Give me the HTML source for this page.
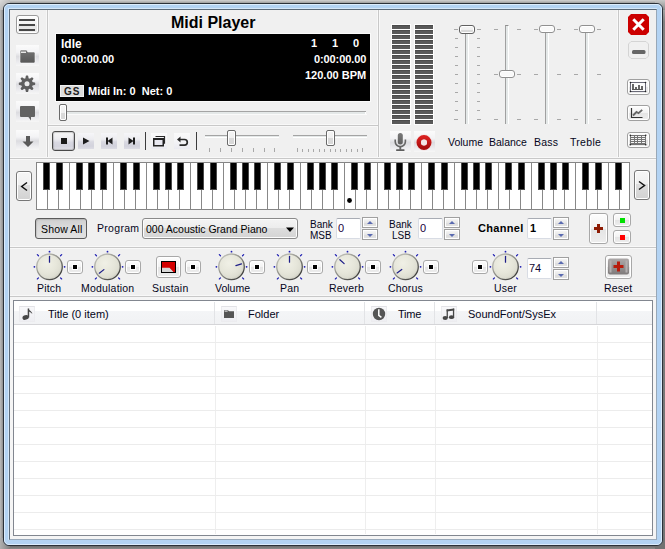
<!DOCTYPE html>
<html><head><meta charset="utf-8">
<style>
*{margin:0;padding:0;box-sizing:border-box}
html,body{width:665px;height:549px;overflow:hidden}
body{position:relative;background:#9a9a9a;font-family:"Liberation Sans",sans-serif;font-size:10.5px;color:#000}
.a{position:absolute}
.t{position:absolute;white-space:nowrap;line-height:1}
#shT{left:0;top:0;width:665px;height:3px;background:linear-gradient(#cfcfcf,#a4a4a4)}
#shB{left:0;top:546px;width:665px;height:3px;background:linear-gradient(#6a6a6a,#9a9a9a)}
#win{left:3px;top:3px;width:660px;height:543px;border:1px solid #2b3139;border-radius:6px;background:#b3d3f3}
#win2{left:4px;top:4px;width:658px;height:541px;border:1px solid #dcecfc;border-radius:5px}
#inner{left:9px;top:9px;width:648px;height:531px;border:1px solid #5b6a79;background:#f0f0f0;border-bottom-color:#9aaabb;border-right-color:#98a8b8}
.vs{position:absolute;width:1px;background:#c8c8c8;box-shadow:-1px 0 0 #f8f8f8,1px 0 0 #f8f8f8}
.hs{position:absolute;height:1px;background:#c8c8c8;box-shadow:0 -1px 0 #f8f8f8,0 1px 0 #f8f8f8}
.gbtn{position:absolute;background:linear-gradient(#fbfbfb 0%,#f3f3f5 35%,#dcdce0 55%,#ebebee 80%,#f6f6f6 100%)}
.rbtn{position:absolute;border:1px solid #a0a0a0;border-radius:3px;background:linear-gradient(#fdfdfd,#f2f2f2 50%,#e4e4e4 51%,#eeeeee);box-shadow:inset 0 0 0 1px #fff}
.thumb{border:1px solid #6a6a6a;border-radius:2px;background:linear-gradient(#f4f4f4 0%,#f0f0f0 50%,#dadada 51%,#d8d8d8);box-shadow:inset 0 0 0 1px #fff}
.track{height:3px;border-top:1px solid #a4a4a4;background:#e4e8e8;border-bottom:1px solid #fff}
.vu{width:20px;height:101px;background:#fff repeating-linear-gradient(#fff 0,#fff 1px,#454545 1px,#585858 2.5px,#5a5a5a 5px);background-size:18px 5px;background-position:1px 0;background-repeat:repeat-y;border-bottom:1px solid #fff}
.vtrack{width:4px;border-left:1px solid #a0a0a0;border-top:1px solid #909090;background:#e4e8e8;border-right:1px solid #fff}
.tk{height:1px;background:#a8a8a8}
.vthumb{border:1px solid #909090;border-radius:3px;background:#f9f9f9;box-shadow:inset 0 0 0 1px #fff}
.lbl{font-size:10.5px;color:#050520}
.arr{border:1px solid #777;border-radius:3px;background:linear-gradient(#f6f6f6,#f0f0f0 45%,#dedede 47%,#d2d2d2);box-shadow:inset 0 0 0 1px #fff}
.ctl{font-size:10.5px}
.sm{font-size:10px;color:#050520}
.edit{border:1px solid #d8dce4;border-top-color:#a8acb4;background:#fff;border-radius:2px}
.spin{border:1px solid #a0a0a0;background:linear-gradient(#f8f8f8,#e8e8e8 50%,#dcdcdc 51%,#e4e4e4);box-shadow:inset 0 0 0 1px #fff}
.kl{font-size:10.5px;color:#050520;letter-spacing:0.2px}
.hib{width:16px;height:16px;border:1px solid #ececef;border-top-color:#e2e2e6;background:linear-gradient(#f8f8fa,#eeeef2)}
.hd{font-size:11px;color:#050520}
.tb{background:linear-gradient(#f6f6f8 0%,#ececf0 40%,#d9d9e1 55%,#d2d2dc 82%,#dcdce4 100%)}
.wb{background:linear-gradient(#fafafa 0%,#f4f4f6 50%,#eaeaf0 100%)}
</style></head><body>
<div class="a" style="left:0;top:0;width:3px;height:549px;background:linear-gradient(90deg,#bcbcbc,#a6a6a6,#8c8c8c)"></div>
<div class="a" style="left:0;top:0;width:665px;height:3px;background:linear-gradient(#d2d2d2,#bababa,#9c9c9c)"></div>
<div class="a" style="left:663px;top:0;width:2px;height:549px;background:linear-gradient(#c0c0c0,#808080 4%,#747474)"></div>
<div class="a" style="left:0;top:546px;width:665px;height:3px;background:linear-gradient(#6c6c6c,#7c7c7c,#8c8c8c)"></div>
<div class="a" style="left:0;top:546px;width:4px;height:3px;background:linear-gradient(90deg,#bbb,#999)"></div>
<div class="a" style="left:655px;top:538px;width:10px;height:11px;background:#727272"></div>
<div class="a" style="left:655px;top:0;width:10px;height:10px;background:linear-gradient(#c8c8c8,#8a8a8a)"></div>
<div class="a" style="left:0;top:538px;width:10px;height:11px;background:linear-gradient(90deg,#b0b0b0,#808080)"></div>
<div class="a" style="left:0;top:0;width:10px;height:10px;background:linear-gradient(135deg,#dadada,#a8a8a8)"></div>
<div class="a" id="win"></div>
<div class="a" id="win2"></div>
<div class="a" style="left:8px;top:8px;width:649px;height:532px;border-top:1px solid #d4e6f8;border-left:1px solid #d4e6f8"></div>
<div class="a" id="inner"></div>

<!-- separators -->
<div class="vs" style="left:47px;top:10px;height:148px"></div>
<div class="vs" style="left:378px;top:10px;height:148px"></div>
<div class="vs" style="left:618px;top:10px;height:148px"></div>
<div class="hs" style="left:48px;top:125px;width:330px"></div>
<div class="hs" style="left:10px;top:158px;width:646px"></div>
<div class="hs" style="left:10px;top:247px;width:646px"></div>
<div class="hs" style="left:10px;top:296px;width:646px"></div>

<!-- sidebar -->
<div class="rbtn" style="left:16px;top:15px;width:23px;height:19px;border-color:#9a9a9a"></div>
<div class="a" style="left:19px;top:19px;width:16px;height:2px;background:#474747"></div>
<div class="a" style="left:19px;top:24px;width:16px;height:2px;background:#474747"></div>
<div class="a" style="left:19px;top:29px;width:16px;height:2px;background:#474747"></div>

<div class="gbtn" style="left:16px;top:45px;width:23px;height:21px"></div>
<svg class="a" style="left:16px;top:45px" width="23" height="21" viewBox="0 0 23 21">
<defs><linearGradient id="fg" x1="0" y1="0" x2="0" y2="1"><stop offset="0" stop-color="#747474"/><stop offset="1" stop-color="#575757"/></linearGradient></defs>
<path d="M4 6.2q0-1.2 1.2-1.2h4.8q0.8 0 1.2 0.8l0.6 1.2h5.9q1.3 0 1.3 1.3v8.5q0 1.2-1.2 1.2h-12.6q-1.2 0-1.2-1.2z" fill="url(#fg)" stroke="#fff" stroke-width="0.7" stroke-opacity="0.8"/>
<rect x="5" y="6.6" width="5" height="1.3" fill="#f4f4f4"/>
</svg>
<div class="gbtn" style="left:16px;top:73px;width:23px;height:21px"></div>
<svg class="a" style="left:16px;top:73px" width="23" height="21" viewBox="0 0 23 21">
<g transform="translate(11,10.7)" fill="#5e5e5e">
<circle r="5.8"/>
<g id="tooth"><path d="M-1.7 -5h3.4l-0.5 -2.7q-0.1 -0.5 -0.6 -0.5h-1.2q-0.5 0 -0.6 0.5z"/></g>
<use href="#tooth" transform="rotate(45)"/><use href="#tooth" transform="rotate(90)"/><use href="#tooth" transform="rotate(135)"/>
<use href="#tooth" transform="rotate(180)"/><use href="#tooth" transform="rotate(225)"/><use href="#tooth" transform="rotate(270)"/><use href="#tooth" transform="rotate(315)"/>
<circle r="2.5" fill="#ebebeb"/>
</g></svg>
<div class="gbtn" style="left:16px;top:101px;width:23px;height:21px"></div>
<svg class="a" style="left:16px;top:101px" width="23" height="21" viewBox="0 0 23 21">
<rect x="4" y="5" width="15" height="11" rx="1" fill="#626262"/>
<path d="M12 15.5h3v4z" fill="#626262"/>
</svg>
<div class="gbtn" style="left:16px;top:130px;width:23px;height:20px"></div>
<svg class="a" style="left:16px;top:130px" width="23" height="20" viewBox="0 0 23 20">
<path d="M10 6h4v5.5h3.5l-5.5 5.5l-5.5-5.5h3.5z" fill="#5a5a5a"/>
</svg>

<!-- title -->
<div class="t" style="left:171px;top:15px;font-size:16px;font-weight:bold">Midi Player</div>

<!-- display -->
<div class="a" style="left:55px;top:33px;width:316px;height:69px;background:#000;border:1px solid #fafafa"></div>
<div class="t" style="left:61px;top:38px;font-size:12px;font-weight:bold;color:#fff">Idle</div>
<div class="t" style="left:61px;top:54px;font-size:11px;font-weight:bold;color:#fff">0:00:00.00</div>
<div class="t" style="left:311px;top:38px;font-size:11px;font-weight:bold;color:#fff">1</div>
<div class="t" style="left:332px;top:38px;font-size:11px;font-weight:bold;color:#fff">1</div>
<div class="t" style="left:353px;top:38px;font-size:11px;font-weight:bold;color:#fff">0</div>
<div class="t" style="left:314px;top:54px;font-size:11px;font-weight:bold;color:#fff;letter-spacing:-0.1px">0:00:00.00</div>
<div class="t" style="left:305px;top:70px;font-size:11px;font-weight:bold;color:#fff">120.00 BPM</div>
<div class="a" style="left:60px;top:85px;width:24px;height:12px;background:#dcdcdc;border:1px solid #efefef"></div>
<div class="t" style="left:64px;top:87px;font-size:10px;font-weight:bold;color:#222;letter-spacing:1px">GS</div>
<div class="t" style="left:88px;top:86px;font-size:11px;font-weight:bold;color:#fff">Midi In: 0&nbsp; Net: 0</div>


<!-- position slider -->
<div class="a" style="left:60px;top:111px;width:306px;height:1px;background:#a4a4a4"></div>
<div class="a" style="left:60px;top:112px;width:306px;height:2px;background:#e4e8e8;border-right:1px solid #fff"></div>
<div class="a" style="left:60px;top:114px;width:307px;height:1px;background:#fafafa"></div>
<div class="a thumb" style="left:59px;top:104px;width:8px;height:17px"></div>

<!-- transport -->
<div class="a" style="left:52px;top:131px;width:23px;height:20px;border:1px solid #4a4a4a;border-radius:3px;background:linear-gradient(#f8f8f8,#ececf0 40%,#d8d8e2 58%,#d4d4de 80%,#e4e4ea);box-shadow:inset 0 0 1px 1px rgba(0,0,0,.18)"></div>
<div class="a" style="left:61px;top:138px;width:6px;height:6px;background:#1a1a1a"></div>
<div class="gbtn tb" style="left:78px;top:133px;width:16px;height:16px"></div>
<svg class="a" style="left:78px;top:133px" width="16" height="16"><path d="M5 4.5v7l6.5-3.5z" fill="#1e1e1e"/></svg>
<div class="gbtn tb" style="left:101px;top:133px;width:16px;height:16px"></div>
<svg class="a" style="left:101px;top:133px" width="16" height="16"><rect x="5" y="4.5" width="2" height="7" fill="#1e1e1e"/><path d="M11.5 4.5v7l-5-3.5z" fill="#1e1e1e"/></svg>
<div class="gbtn tb" style="left:124px;top:133px;width:16px;height:16px"></div>
<svg class="a" style="left:124px;top:133px" width="16" height="16"><rect x="9" y="4.5" width="2" height="7" fill="#1e1e1e"/><path d="M4.5 4.5v7l5-3.5z" fill="#1e1e1e"/></svg>
<div class="a" style="left:145px;top:132px;width:1px;height:18px;background:#3c3c3c"></div>
<div class="gbtn wb" style="left:151px;top:133px;width:16px;height:16px"></div>
<svg class="a" style="left:151px;top:133px" width="16" height="16"><rect x="2.75" y="5.75" width="9.5" height="7" fill="#e8e8f0" stroke="#222" stroke-width="1.5"/><rect x="2" y="5" width="11" height="2" fill="#222"/><path d="M4.5 3.5h9v7.2" fill="none" stroke="#2a2a2a" stroke-width="1.2"/></svg>
<div class="gbtn wb" style="left:174px;top:133px;width:16px;height:16px"></div>
<svg class="a" style="left:174px;top:133px" width="16" height="16"><path d="M6 6.5h4.5a2.8 2.8 0 0 1 0 5.6h-5" fill="none" stroke="#2a2a2a" stroke-width="1.7"/><path d="M3 6.5l3.5-3v6z" fill="#2a2a2a"/></svg>
<div class="a" style="left:196px;top:132px;width:1px;height:18px;background:#3c3c3c"></div>

<!-- small sliders -->
<div class="a track" style="left:205px;top:135px;width:74px"></div>
<div class="a thumb" style="left:227px;top:130px;width:9px;height:16px"></div>
<div class="a track" style="left:293px;top:135px;width:74px"></div>
<div class="a thumb" style="left:326px;top:130px;width:9px;height:16px"></div>
<div class="a" style="left:209px;top:148px;width:1px;height:4px;background:#a8a8a8"></div>
<div class="a" style="left:220px;top:148px;width:1px;height:4px;background:#a8a8a8"></div>
<div class="a" style="left:231px;top:148px;width:1px;height:4px;background:#a8a8a8"></div>
<div class="a" style="left:242px;top:148px;width:1px;height:4px;background:#a8a8a8"></div>
<div class="a" style="left:253px;top:148px;width:1px;height:4px;background:#a8a8a8"></div>
<div class="a" style="left:264px;top:148px;width:1px;height:4px;background:#a8a8a8"></div>
<div class="a" style="left:274px;top:148px;width:1px;height:4px;background:#a8a8a8"></div>
<div class="a" style="left:297px;top:148px;width:1px;height:4px;background:#a8a8a8"></div>
<div class="a" style="left:302px;top:149px;width:1px;height:3px;background:#a8a8a8"></div>
<div class="a" style="left:308px;top:149px;width:1px;height:3px;background:#a8a8a8"></div>
<div class="a" style="left:313px;top:149px;width:1px;height:3px;background:#a8a8a8"></div>
<div class="a" style="left:319px;top:149px;width:1px;height:3px;background:#a8a8a8"></div>
<div class="a" style="left:324px;top:149px;width:1px;height:3px;background:#a8a8a8"></div>
<div class="a" style="left:330px;top:149px;width:1px;height:3px;background:#a8a8a8"></div>
<div class="a" style="left:335px;top:149px;width:1px;height:3px;background:#a8a8a8"></div>
<div class="a" style="left:340px;top:149px;width:1px;height:3px;background:#a8a8a8"></div>
<div class="a" style="left:346px;top:149px;width:1px;height:3px;background:#a8a8a8"></div>
<div class="a" style="left:351px;top:149px;width:1px;height:3px;background:#a8a8a8"></div>
<div class="a" style="left:357px;top:149px;width:1px;height:3px;background:#a8a8a8"></div>
<div class="a" style="left:362px;top:148px;width:1px;height:4px;background:#a8a8a8"></div>

<!-- VU -->
<div class="a vu" style="left:391px;top:24px"></div>
<div class="a vu" style="left:414px;top:24px"></div>
<div class="gbtn" style="left:390px;top:131px;width:21px;height:21px"></div>
<svg class="a" style="left:390px;top:131px" width="21" height="21" viewBox="0 0 21 21">
<defs><linearGradient id="mg" x1="0" y1="0" x2="0" y2="1"><stop offset="0" stop-color="#7a7a7a"/><stop offset="1" stop-color="#5e5e5e"/></linearGradient></defs>
<rect x="7.8" y="2" width="5" height="11.5" rx="2.5" fill="url(#mg)"/>
<path d="M5.2 8.5v2a5.1 5.1 0 0 0 10.2 0v-2" fill="none" stroke="#666" stroke-width="1.6"/>
<rect x="9.4" y="15.5" width="1.8" height="3.2" fill="#666"/>
<rect x="6" y="18.2" width="8.6" height="1.8" rx="0.7" fill="#5e5e5e"/>
</svg>
<div class="gbtn" style="left:414px;top:131px;width:21px;height:21px"></div>
<svg class="a" style="left:414px;top:131px" width="21" height="21" viewBox="0 0 21 21">
<defs><linearGradient id="rg" x1="0" y1="0" x2="0" y2="1"><stop offset="0" stop-color="#d82020"/><stop offset="1" stop-color="#a80c0c"/></linearGradient></defs>
<circle cx="10" cy="11.5" r="8.2" fill="#f6d4d4" opacity="0.55"/>
<circle cx="10" cy="11.5" r="5.25" fill="none" stroke="url(#rg)" stroke-width="4.5"/>
<circle cx="10" cy="11.5" r="3" fill="#f2e4e4"/>
</svg>

<!-- vertical sliders -->
<div class="a vtrack" style="left:465px;top:25px;height:99px"></div>
<div class="a tk" style="left:454px;top:29px;width:4px"></div><div class="a tk" style="left:477px;top:29px;width:4px"></div>
<div class="a tk" style="left:455px;top:38px;width:3px"></div><div class="a tk" style="left:477px;top:38px;width:3px"></div>
<div class="a tk" style="left:455px;top:47px;width:3px"></div><div class="a tk" style="left:477px;top:47px;width:3px"></div>
<div class="a tk" style="left:455px;top:56px;width:3px"></div><div class="a tk" style="left:477px;top:56px;width:3px"></div>
<div class="a tk" style="left:455px;top:65px;width:3px"></div><div class="a tk" style="left:477px;top:65px;width:3px"></div>
<div class="a tk" style="left:455px;top:74px;width:3px"></div><div class="a tk" style="left:477px;top:74px;width:3px"></div>
<div class="a tk" style="left:455px;top:83px;width:3px"></div><div class="a tk" style="left:477px;top:83px;width:3px"></div>
<div class="a tk" style="left:455px;top:92px;width:3px"></div><div class="a tk" style="left:477px;top:92px;width:3px"></div>
<div class="a tk" style="left:455px;top:101px;width:3px"></div><div class="a tk" style="left:477px;top:101px;width:3px"></div>
<div class="a tk" style="left:455px;top:110px;width:3px"></div><div class="a tk" style="left:477px;top:110px;width:3px"></div>
<div class="a tk" style="left:454px;top:119px;width:4px"></div><div class="a tk" style="left:477px;top:119px;width:4px"></div>
<div class="a vtrack" style="left:505px;top:25px;height:99px"></div>
<div class="a tk" style="left:494px;top:29px;width:4px"></div><div class="a tk" style="left:517px;top:29px;width:4px"></div>
<div class="a tk" style="left:494px;top:74px;width:4px"></div><div class="a tk" style="left:517px;top:74px;width:4px"></div>
<div class="a tk" style="left:494px;top:119px;width:4px"></div><div class="a tk" style="left:517px;top:119px;width:4px"></div>
<div class="a vtrack" style="left:545px;top:25px;height:99px"></div>
<div class="a tk" style="left:534px;top:29px;width:4px"></div><div class="a tk" style="left:557px;top:29px;width:4px"></div>
<div class="a tk" style="left:534px;top:74px;width:4px"></div><div class="a tk" style="left:557px;top:74px;width:4px"></div>
<div class="a tk" style="left:534px;top:119px;width:4px"></div><div class="a tk" style="left:557px;top:119px;width:4px"></div>
<div class="a vtrack" style="left:585px;top:25px;height:99px"></div>
<div class="a tk" style="left:574px;top:29px;width:4px"></div><div class="a tk" style="left:597px;top:29px;width:4px"></div>
<div class="a tk" style="left:574px;top:74px;width:4px"></div><div class="a tk" style="left:597px;top:74px;width:4px"></div>
<div class="a tk" style="left:574px;top:119px;width:4px"></div><div class="a tk" style="left:597px;top:119px;width:4px"></div>
<div class="a thumb" style="left:459px;top:25px;width:16px;height:9px;border-color:#606060;border-radius:3px"></div>
<div class="a vthumb" style="left:499px;top:70px;width:16px;height:8px"></div>
<div class="a vthumb" style="left:539px;top:25px;width:16px;height:8px"></div>
<div class="a vthumb" style="left:579px;top:25px;width:16px;height:8px"></div>
<div class="t lbl" style="left:448px;top:137px">Volume</div>
<div class="t lbl" style="left:489px;top:137px">Balance</div>
<div class="t lbl" style="left:534px;top:137px;letter-spacing:0.2px">Bass</div>
<div class="t lbl" style="left:570px;top:137px;letter-spacing:0.3px">Treble</div>

<!-- right toolbar -->
<svg class="a" style="left:628px;top:14px" width="21" height="21" viewBox="0 0 21 21">
<path d="M3 0h15l3 3v15l-3 3h-15l-3-3v-15z" fill="#cc0000"/>
<path d="M5.3 5.3l10.4 10.4M15.7 5.3l-10.4 10.4" stroke="#fff" stroke-width="3"/>
</svg>
<svg class="a" style="left:628px;top:41px" width="21" height="18" viewBox="0 0 21 18">
<path d="M3 0.5h15l2.5 2.5v12l-2.5 2.5h-15l-2.5-2.5v-12z" fill="#f0f0f0" stroke="#d4d4d4"/>
<rect x="4" y="9" width="13.5" height="4" rx="1.5" fill="#666"/>
</svg>
<div class="rbtn" style="left:627px;top:79px;width:23px;height:16px"></div>
<svg class="a" style="left:627px;top:79px" width="23" height="16" viewBox="0 0 23 16">
<rect x="3.5" y="3.5" width="15" height="9" fill="#fafafa" stroke="#6a6a78"/>
<rect x="5" y="5" width="2" height="6" fill="#666"/><rect x="8" y="8" width="2" height="3" fill="#666"/>
<rect x="11" y="6" width="2" height="5" fill="#666"/><rect x="14" y="7" width="2" height="4" fill="#666"/>
<rect x="5" y="10" width="11" height="1" fill="#555"/>
<circle cx="3.5" cy="3.5" r="0.8" fill="#222"/><circle cx="18.5" cy="3.5" r="0.8" fill="#222"/><circle cx="3.5" cy="12.5" r="0.8" fill="#222"/><circle cx="18.5" cy="12.5" r="0.8" fill="#222"/>
</svg>
<div class="rbtn" style="left:627px;top:105px;width:23px;height:16px"></div>
<svg class="a" style="left:627px;top:105px" width="23" height="16" viewBox="0 0 23 16">
<path d="M4.5 3v9.5h11" fill="none" stroke="#333" stroke-width="1.2"/>
<path d="M6 10.5l3.5-3.5l2 1.2l3.7-3.4" fill="none" stroke="#666" stroke-width="1.8"/>
</svg>
<div class="rbtn" style="left:627px;top:132px;width:23px;height:16px"></div>
<svg class="a" style="left:627px;top:132px" width="23" height="16" viewBox="0 0 23 16">
<rect x="3" y="3" width="16" height="10" fill="#747474"/>
<g fill="#f4f4f4">
<rect x="4" y="4" width="3" height="1"/><rect x="8" y="4" width="2" height="1"/><rect x="11" y="4" width="3" height="1"/><rect x="15" y="4" width="3" height="1"/>
<rect x="4" y="6" width="3" height="1"/><rect x="8" y="6" width="2" height="1"/><rect x="11" y="6" width="3" height="1"/><rect x="15" y="6" width="3" height="1"/>
<rect x="4" y="8" width="3" height="1"/><rect x="8" y="8" width="2" height="1"/><rect x="11" y="8" width="3" height="1"/><rect x="15" y="8" width="3" height="1"/>
<rect x="4" y="10" width="3" height="1"/><rect x="8" y="10" width="2" height="1"/><rect x="11" y="10" width="3" height="1"/><rect x="15" y="10" width="3" height="1"/>
</g>
<circle cx="3.3" cy="3.3" r="0.8" fill="#222"/><circle cx="18.7" cy="3.3" r="0.8" fill="#222"/><circle cx="3.3" cy="12.7" r="0.8" fill="#222"/><circle cx="18.7" cy="12.7" r="0.8" fill="#222"/>
</svg>

<!-- piano -->
<div class="arr a" style="left:16px;top:171px;width:16px;height:30px"></div>
<svg class="a" style="left:16px;top:171px" width="16" height="30"><path d="M11 11.5l-5.3 4l5.3 4" fill="none" stroke="#111" stroke-width="1.5"/></svg>
<div class="arr a" style="left:634px;top:170px;width:16px;height:30px"></div>
<svg class="a" style="left:634px;top:170px" width="16" height="30"><path d="M5 11.5l5.5 4l-5.5 4" fill="none" stroke="#111" stroke-width="1.5"/></svg>
<svg class="a" style="left:36px;top:162px" width="594" height="48" viewBox="0 0 594 48" shape-rendering="crispEdges">
<rect x="0.5" y="0.5" width="593" height="47" fill="#fff" stroke="#858585"/>
<rect x="11" y="0" width="1" height="48" fill="#888"/><rect x="22" y="0" width="1" height="48" fill="#888"/><rect x="33" y="0" width="1" height="48" fill="#888"/><rect x="44" y="0" width="1" height="48" fill="#888"/><rect x="55" y="0" width="1" height="48" fill="#888"/><rect x="66" y="0" width="1" height="48" fill="#888"/><rect x="77" y="0" width="1" height="48" fill="#888"/><rect x="88" y="0" width="1" height="48" fill="#888"/><rect x="99" y="0" width="1" height="48" fill="#888"/><rect x="110" y="0" width="1" height="48" fill="#888"/><rect x="121" y="0" width="1" height="48" fill="#888"/><rect x="132" y="0" width="1" height="48" fill="#888"/><rect x="143" y="0" width="1" height="48" fill="#888"/><rect x="154" y="0" width="1" height="48" fill="#888"/><rect x="165" y="0" width="1" height="48" fill="#888"/><rect x="176" y="0" width="1" height="48" fill="#888"/><rect x="187" y="0" width="1" height="48" fill="#888"/><rect x="198" y="0" width="1" height="48" fill="#888"/><rect x="209" y="0" width="1" height="48" fill="#888"/><rect x="220" y="0" width="1" height="48" fill="#888"/><rect x="231" y="0" width="1" height="48" fill="#888"/><rect x="242" y="0" width="1" height="48" fill="#888"/><rect x="253" y="0" width="1" height="48" fill="#888"/><rect x="264" y="0" width="1" height="48" fill="#888"/><rect x="275" y="0" width="1" height="48" fill="#888"/><rect x="286" y="0" width="1" height="48" fill="#888"/><rect x="297" y="0" width="1" height="48" fill="#888"/><rect x="308" y="0" width="1" height="48" fill="#888"/><rect x="319" y="0" width="1" height="48" fill="#888"/><rect x="330" y="0" width="1" height="48" fill="#888"/><rect x="341" y="0" width="1" height="48" fill="#888"/><rect x="352" y="0" width="1" height="48" fill="#888"/><rect x="363" y="0" width="1" height="48" fill="#888"/><rect x="374" y="0" width="1" height="48" fill="#888"/><rect x="385" y="0" width="1" height="48" fill="#888"/><rect x="396" y="0" width="1" height="48" fill="#888"/><rect x="407" y="0" width="1" height="48" fill="#888"/><rect x="418" y="0" width="1" height="48" fill="#888"/><rect x="429" y="0" width="1" height="48" fill="#888"/><rect x="440" y="0" width="1" height="48" fill="#888"/><rect x="451" y="0" width="1" height="48" fill="#888"/><rect x="462" y="0" width="1" height="48" fill="#888"/><rect x="473" y="0" width="1" height="48" fill="#888"/><rect x="484" y="0" width="1" height="48" fill="#888"/><rect x="495" y="0" width="1" height="48" fill="#888"/><rect x="506" y="0" width="1" height="48" fill="#888"/><rect x="517" y="0" width="1" height="48" fill="#888"/><rect x="528" y="0" width="1" height="48" fill="#888"/><rect x="539" y="0" width="1" height="48" fill="#888"/><rect x="550" y="0" width="1" height="48" fill="#888"/><rect x="561" y="0" width="1" height="48" fill="#888"/><rect x="572" y="0" width="1" height="48" fill="#888"/><rect x="583" y="0" width="1" height="48" fill="#888"/>
<rect x="7" y="1" width="7" height="27" fill="#4a4a4a"/><rect x="8" y="1" width="5" height="26" fill="#000"/><rect x="20" y="1" width="7" height="27" fill="#4a4a4a"/><rect x="21" y="1" width="5" height="26" fill="#000"/><rect x="40" y="1" width="7" height="27" fill="#4a4a4a"/><rect x="41" y="1" width="5" height="26" fill="#000"/><rect x="52" y="1" width="7" height="27" fill="#4a4a4a"/><rect x="53" y="1" width="5" height="26" fill="#000"/><rect x="64" y="1" width="7" height="27" fill="#4a4a4a"/><rect x="65" y="1" width="5" height="26" fill="#000"/><rect x="84" y="1" width="7" height="27" fill="#4a4a4a"/><rect x="85" y="1" width="5" height="26" fill="#000"/><rect x="97" y="1" width="7" height="27" fill="#4a4a4a"/><rect x="98" y="1" width="5" height="26" fill="#000"/><rect x="117" y="1" width="7" height="27" fill="#4a4a4a"/><rect x="118" y="1" width="5" height="26" fill="#000"/><rect x="129" y="1" width="7" height="27" fill="#4a4a4a"/><rect x="130" y="1" width="5" height="26" fill="#000"/><rect x="141" y="1" width="7" height="27" fill="#4a4a4a"/><rect x="142" y="1" width="5" height="26" fill="#000"/><rect x="161" y="1" width="7" height="27" fill="#4a4a4a"/><rect x="162" y="1" width="5" height="26" fill="#000"/><rect x="174" y="1" width="7" height="27" fill="#4a4a4a"/><rect x="175" y="1" width="5" height="26" fill="#000"/><rect x="194" y="1" width="7" height="27" fill="#4a4a4a"/><rect x="195" y="1" width="5" height="26" fill="#000"/><rect x="206" y="1" width="7" height="27" fill="#4a4a4a"/><rect x="207" y="1" width="5" height="26" fill="#000"/><rect x="218" y="1" width="7" height="27" fill="#4a4a4a"/><rect x="219" y="1" width="5" height="26" fill="#000"/><rect x="238" y="1" width="7" height="27" fill="#4a4a4a"/><rect x="239" y="1" width="5" height="26" fill="#000"/><rect x="251" y="1" width="7" height="27" fill="#4a4a4a"/><rect x="252" y="1" width="5" height="26" fill="#000"/><rect x="271" y="1" width="7" height="27" fill="#4a4a4a"/><rect x="272" y="1" width="5" height="26" fill="#000"/><rect x="283" y="1" width="7" height="27" fill="#4a4a4a"/><rect x="284" y="1" width="5" height="26" fill="#000"/><rect x="295" y="1" width="7" height="27" fill="#4a4a4a"/><rect x="296" y="1" width="5" height="26" fill="#000"/><rect x="315" y="1" width="7" height="27" fill="#4a4a4a"/><rect x="316" y="1" width="5" height="26" fill="#000"/><rect x="328" y="1" width="7" height="27" fill="#4a4a4a"/><rect x="329" y="1" width="5" height="26" fill="#000"/><rect x="348" y="1" width="7" height="27" fill="#4a4a4a"/><rect x="349" y="1" width="5" height="26" fill="#000"/><rect x="360" y="1" width="7" height="27" fill="#4a4a4a"/><rect x="361" y="1" width="5" height="26" fill="#000"/><rect x="372" y="1" width="7" height="27" fill="#4a4a4a"/><rect x="373" y="1" width="5" height="26" fill="#000"/><rect x="392" y="1" width="7" height="27" fill="#4a4a4a"/><rect x="393" y="1" width="5" height="26" fill="#000"/><rect x="405" y="1" width="7" height="27" fill="#4a4a4a"/><rect x="406" y="1" width="5" height="26" fill="#000"/><rect x="425" y="1" width="7" height="27" fill="#4a4a4a"/><rect x="426" y="1" width="5" height="26" fill="#000"/><rect x="437" y="1" width="7" height="27" fill="#4a4a4a"/><rect x="438" y="1" width="5" height="26" fill="#000"/><rect x="449" y="1" width="7" height="27" fill="#4a4a4a"/><rect x="450" y="1" width="5" height="26" fill="#000"/><rect x="469" y="1" width="7" height="27" fill="#4a4a4a"/><rect x="470" y="1" width="5" height="26" fill="#000"/><rect x="482" y="1" width="7" height="27" fill="#4a4a4a"/><rect x="483" y="1" width="5" height="26" fill="#000"/><rect x="502" y="1" width="7" height="27" fill="#4a4a4a"/><rect x="503" y="1" width="5" height="26" fill="#000"/><rect x="514" y="1" width="7" height="27" fill="#4a4a4a"/><rect x="515" y="1" width="5" height="26" fill="#000"/><rect x="526" y="1" width="7" height="27" fill="#4a4a4a"/><rect x="527" y="1" width="5" height="26" fill="#000"/><rect x="546" y="1" width="7" height="27" fill="#4a4a4a"/><rect x="547" y="1" width="5" height="26" fill="#000"/><rect x="559" y="1" width="7" height="27" fill="#4a4a4a"/><rect x="560" y="1" width="5" height="26" fill="#000"/><rect x="579" y="1" width="7" height="27" fill="#4a4a4a"/><rect x="580" y="1" width="5" height="26" fill="#000"/>
<circle cx="313.5" cy="38.5" r="2.4" fill="#000" shape-rendering="auto"/>
</svg>

<!-- controls row -->
<div class="a" style="left:35px;top:218px;width:52px;height:21px;border:1px solid #5a5a5a;border-radius:3px;background:linear-gradient(#cfcfcf,#dadada 40%,#e2e2e2);box-shadow:inset 1px 1px 1px rgba(0,0,0,.12)"></div>
<div class="t ctl" style="left:41px;top:224px;letter-spacing:0.15px">Show All</div>
<div class="t ctl" style="left:97px;top:223px;color:#050520;letter-spacing:0.3px">Program</div>
<div class="a" style="left:142px;top:218px;width:156px;height:21px;border:1px solid #8a8a8a;border-radius:3px;background:linear-gradient(#f4f4f4,#ededed 45%,#dddddd 50%,#d4d4d4);box-shadow:inset 0 0 0 1px #fcfcfc"></div>
<div class="t ctl" style="left:146px;top:224px">000 Acoustic Grand Piano</div>
<svg class="a" style="left:285px;top:226px" width="10" height="7"><path d="M1 1.5h8l-4 4.5z" fill="#000"/></svg>
<div class="t sm" style="left:310px;top:220px">Bank</div>
<div class="t sm" style="left:310px;top:231px">MSB</div>
<div class="a edit" style="left:336px;top:218px;width:25px;height:21px"></div>
<div class="t" style="left:338px;top:223px;font-size:11px;color:#200040">0</div>
<div class="a spin" style="left:362px;top:217px;width:16px;height:11px"></div>
<div class="a spin" style="left:362px;top:229px;width:16px;height:11px"></div>
<svg class="a" style="left:362px;top:217px" width="16" height="23"><path d="M5 7h6l-3-3z" fill="#5a6ab0"/><path d="M5 17h6l-3 3z" fill="#5a6ab0"/></svg>
<div class="t sm" style="left:389px;top:220px">Bank</div>
<div class="t sm" style="left:392px;top:231px">LSB</div>
<div class="a edit" style="left:418px;top:218px;width:25px;height:21px"></div>
<div class="t" style="left:420px;top:223px;font-size:11px;color:#200040">0</div>
<div class="a spin" style="left:444px;top:217px;width:16px;height:11px"></div>
<div class="a spin" style="left:444px;top:229px;width:16px;height:11px"></div>
<svg class="a" style="left:444px;top:217px" width="16" height="23"><path d="M5 7h6l-3-3z" fill="#5a6ab0"/><path d="M5 17h6l-3 3z" fill="#5a6ab0"/></svg>
<div class="t" style="left:478px;top:223px;font-size:11px;font-weight:bold;letter-spacing:0.3px">Channel</div>
<div class="a edit" style="left:527px;top:218px;width:25px;height:21px"></div>
<div class="t" style="left:530px;top:223px;font-size:11px;font-weight:bold">1</div>
<div class="a spin" style="left:553px;top:217px;width:16px;height:11px"></div>
<div class="a spin" style="left:553px;top:229px;width:16px;height:11px"></div>
<svg class="a" style="left:553px;top:217px" width="16" height="23"><path d="M5 7h6l-3-3z" fill="#5a6ab0"/><path d="M5 17h6l-3 3z" fill="#5a6ab0"/></svg>
<div class="a rbtn" style="left:589px;top:213px;width:19px;height:31px;border-color:#a8a8a8"></div>
<svg class="a" style="left:589px;top:213px" width="19" height="31"><path d="M8 11h3v3h3v3h-3v3h-3v-3h-3v-3h3z" fill="#8e1c04"/></svg>
<div class="a rbtn" style="left:613px;top:213px;width:18px;height:14px;border-color:#a8a8a8"></div>
<div class="a" style="left:620px;top:218px;width:5px;height:5px;background:#00e000"></div>
<div class="a rbtn" style="left:613px;top:230px;width:18px;height:14px;border-color:#a8a8a8"></div>
<div class="a" style="left:620px;top:235px;width:5px;height:5px;background:#ff0000"></div>

<!-- knobs row -->
<svg class="a" width="0" height="0" style="left:0;top:0"><defs>
<radialGradient id="kg" cx="0.4" cy="0.36" r="0.7">
<stop offset="0" stop-color="#f0f0e6"/><stop offset="0.55" stop-color="#e6e6da"/><stop offset="0.8" stop-color="#deded2"/><stop offset="1" stop-color="#c4c4b8"/>
</radialGradient>
<linearGradient id="kr" x1="0.15" y1="0.1" x2="0.85" y2="0.9"><stop offset="0" stop-color="#c0c0b8"/><stop offset="0.5" stop-color="#8a8a84"/><stop offset="1" stop-color="#3c3c3a"/></linearGradient>
</defs></svg>
<svg class="a" style="left:32px;top:249px" width="35" height="35" viewBox="0 0 35 35"><circle cx="17.5" cy="17.80000000000001" r="12.8" fill="url(#kg)" stroke="url(#kr)" stroke-width="1.3"/><line x1="6.47" y1="28.83" x2="5.34" y2="29.96" stroke="#1c1cb0" stroke-width="1.2" stroke-linecap="round"/><circle cx="2.40" cy="17.80" r="0.9" fill="#1c1cb0"/><line x1="6.47" y1="6.77" x2="5.34" y2="5.64" stroke="#1c1cb0" stroke-width="1.2" stroke-linecap="round"/><circle cx="17.50" cy="2.70" r="0.9" fill="#1c1cb0"/><line x1="28.53" y1="6.77" x2="29.66" y2="5.64" stroke="#1c1cb0" stroke-width="1.2" stroke-linecap="round"/><circle cx="32.60" cy="17.80" r="0.9" fill="#1c1cb0"/><line x1="28.53" y1="28.83" x2="29.66" y2="29.96" stroke="#1c1cb0" stroke-width="1.2" stroke-linecap="round"/><line x1="17.50" y1="13.20" x2="17.50" y2="7.40" stroke="#1e1e88" stroke-width="1.25" stroke-linecap="round"/></svg>
<svg class="a" style="left:90px;top:249px" width="35" height="35" viewBox="0 0 35 35"><circle cx="17.5" cy="17.80000000000001" r="12.8" fill="url(#kg)" stroke="url(#kr)" stroke-width="1.3"/><line x1="6.47" y1="28.83" x2="5.34" y2="29.96" stroke="#1c1cb0" stroke-width="1.2" stroke-linecap="round"/><circle cx="2.40" cy="17.80" r="0.9" fill="#1c1cb0"/><line x1="6.47" y1="6.77" x2="5.34" y2="5.64" stroke="#1c1cb0" stroke-width="1.2" stroke-linecap="round"/><circle cx="17.50" cy="2.70" r="0.9" fill="#1c1cb0"/><line x1="28.53" y1="6.77" x2="29.66" y2="5.64" stroke="#1c1cb0" stroke-width="1.2" stroke-linecap="round"/><circle cx="32.60" cy="17.80" r="0.9" fill="#1c1cb0"/><line x1="28.53" y1="28.83" x2="29.66" y2="29.96" stroke="#1c1cb0" stroke-width="1.2" stroke-linecap="round"/><line x1="13.88" y1="20.63" x2="9.30" y2="24.20" stroke="#1e1e88" stroke-width="1.25" stroke-linecap="round"/></svg>
<svg class="a" style="left:214px;top:249px" width="35" height="35" viewBox="0 0 35 35"><circle cx="17.5" cy="17.80000000000001" r="12.8" fill="url(#kg)" stroke="url(#kr)" stroke-width="1.3"/><line x1="6.47" y1="28.83" x2="5.34" y2="29.96" stroke="#1c1cb0" stroke-width="1.2" stroke-linecap="round"/><circle cx="2.40" cy="17.80" r="0.9" fill="#1c1cb0"/><line x1="6.47" y1="6.77" x2="5.34" y2="5.64" stroke="#1c1cb0" stroke-width="1.2" stroke-linecap="round"/><circle cx="17.50" cy="2.70" r="0.9" fill="#1c1cb0"/><line x1="28.53" y1="6.77" x2="29.66" y2="5.64" stroke="#1c1cb0" stroke-width="1.2" stroke-linecap="round"/><circle cx="32.60" cy="17.80" r="0.9" fill="#1c1cb0"/><line x1="28.53" y1="28.83" x2="29.66" y2="29.96" stroke="#1c1cb0" stroke-width="1.2" stroke-linecap="round"/><line x1="21.92" y1="16.53" x2="27.50" y2="14.93" stroke="#1e1e88" stroke-width="1.25" stroke-linecap="round"/></svg>
<svg class="a" style="left:272px;top:249px" width="35" height="35" viewBox="0 0 35 35"><circle cx="17.5" cy="17.80000000000001" r="12.8" fill="url(#kg)" stroke="url(#kr)" stroke-width="1.3"/><line x1="6.47" y1="28.83" x2="5.34" y2="29.96" stroke="#1c1cb0" stroke-width="1.2" stroke-linecap="round"/><circle cx="2.40" cy="17.80" r="0.9" fill="#1c1cb0"/><line x1="6.47" y1="6.77" x2="5.34" y2="5.64" stroke="#1c1cb0" stroke-width="1.2" stroke-linecap="round"/><circle cx="17.50" cy="2.70" r="0.9" fill="#1c1cb0"/><line x1="28.53" y1="6.77" x2="29.66" y2="5.64" stroke="#1c1cb0" stroke-width="1.2" stroke-linecap="round"/><circle cx="32.60" cy="17.80" r="0.9" fill="#1c1cb0"/><line x1="28.53" y1="28.83" x2="29.66" y2="29.96" stroke="#1c1cb0" stroke-width="1.2" stroke-linecap="round"/><line x1="17.50" y1="13.20" x2="17.50" y2="7.40" stroke="#1e1e88" stroke-width="1.25" stroke-linecap="round"/></svg>
<svg class="a" style="left:330px;top:249px" width="35" height="35" viewBox="0 0 35 35"><circle cx="17.5" cy="17.80000000000001" r="12.8" fill="url(#kg)" stroke="url(#kr)" stroke-width="1.3"/><line x1="6.47" y1="28.83" x2="5.34" y2="29.96" stroke="#1c1cb0" stroke-width="1.2" stroke-linecap="round"/><circle cx="2.40" cy="17.80" r="0.9" fill="#1c1cb0"/><line x1="6.47" y1="6.77" x2="5.34" y2="5.64" stroke="#1c1cb0" stroke-width="1.2" stroke-linecap="round"/><circle cx="17.50" cy="2.70" r="0.9" fill="#1c1cb0"/><line x1="28.53" y1="6.77" x2="29.66" y2="5.64" stroke="#1c1cb0" stroke-width="1.2" stroke-linecap="round"/><circle cx="32.60" cy="17.80" r="0.9" fill="#1c1cb0"/><line x1="28.53" y1="28.83" x2="29.66" y2="29.96" stroke="#1c1cb0" stroke-width="1.2" stroke-linecap="round"/><line x1="14.14" y1="14.66" x2="9.89" y2="10.71" stroke="#1e1e88" stroke-width="1.25" stroke-linecap="round"/></svg>
<svg class="a" style="left:388px;top:249px" width="35" height="35" viewBox="0 0 35 35"><circle cx="17.5" cy="17.80000000000001" r="12.8" fill="url(#kg)" stroke="url(#kr)" stroke-width="1.3"/><line x1="6.47" y1="28.83" x2="5.34" y2="29.96" stroke="#1c1cb0" stroke-width="1.2" stroke-linecap="round"/><circle cx="2.40" cy="17.80" r="0.9" fill="#1c1cb0"/><line x1="6.47" y1="6.77" x2="5.34" y2="5.64" stroke="#1c1cb0" stroke-width="1.2" stroke-linecap="round"/><circle cx="17.50" cy="2.70" r="0.9" fill="#1c1cb0"/><line x1="28.53" y1="6.77" x2="29.66" y2="5.64" stroke="#1c1cb0" stroke-width="1.2" stroke-linecap="round"/><circle cx="32.60" cy="17.80" r="0.9" fill="#1c1cb0"/><line x1="28.53" y1="28.83" x2="29.66" y2="29.96" stroke="#1c1cb0" stroke-width="1.2" stroke-linecap="round"/><line x1="13.78" y1="20.50" x2="9.09" y2="23.91" stroke="#1e1e88" stroke-width="1.25" stroke-linecap="round"/></svg>
<svg class="a" style="left:488px;top:249px" width="35" height="35" viewBox="0 0 35 35"><circle cx="17.5" cy="17.80000000000001" r="12.8" fill="url(#kg)" stroke="url(#kr)" stroke-width="1.3"/><line x1="6.47" y1="28.83" x2="5.34" y2="29.96" stroke="#1c1cb0" stroke-width="1.2" stroke-linecap="round"/><circle cx="2.40" cy="17.80" r="0.9" fill="#1c1cb0"/><line x1="6.47" y1="6.77" x2="5.34" y2="5.64" stroke="#1c1cb0" stroke-width="1.2" stroke-linecap="round"/><circle cx="17.50" cy="2.70" r="0.9" fill="#1c1cb0"/><line x1="28.53" y1="6.77" x2="29.66" y2="5.64" stroke="#1c1cb0" stroke-width="1.2" stroke-linecap="round"/><circle cx="32.60" cy="17.80" r="0.9" fill="#1c1cb0"/><line x1="28.53" y1="28.83" x2="29.66" y2="29.96" stroke="#1c1cb0" stroke-width="1.2" stroke-linecap="round"/><line x1="17.50" y1="13.20" x2="17.50" y2="7.40" stroke="#1e1e88" stroke-width="1.25" stroke-linecap="round"/></svg>
<div class="a rbtn" style="left:67px;top:260px;width:16px;height:14px;border-color:#a8a8a8"></div><div class="a" style="left:73px;top:265px;width:4px;height:4px;background:#000;box-shadow:0 0 0 1px #fff"></div>
<div class="a rbtn" style="left:125px;top:260px;width:16px;height:14px;border-color:#a8a8a8"></div><div class="a" style="left:131px;top:265px;width:4px;height:4px;background:#000;box-shadow:0 0 0 1px #fff"></div>
<div class="a rbtn" style="left:185px;top:260px;width:16px;height:14px;border-color:#a8a8a8"></div><div class="a" style="left:191px;top:265px;width:4px;height:4px;background:#000;box-shadow:0 0 0 1px #fff"></div>
<div class="a rbtn" style="left:249px;top:260px;width:16px;height:14px;border-color:#a8a8a8"></div><div class="a" style="left:255px;top:265px;width:4px;height:4px;background:#000;box-shadow:0 0 0 1px #fff"></div>
<div class="a rbtn" style="left:307px;top:260px;width:16px;height:14px;border-color:#a8a8a8"></div><div class="a" style="left:313px;top:265px;width:4px;height:4px;background:#000;box-shadow:0 0 0 1px #fff"></div>
<div class="a rbtn" style="left:365px;top:260px;width:16px;height:14px;border-color:#a8a8a8"></div><div class="a" style="left:371px;top:265px;width:4px;height:4px;background:#000;box-shadow:0 0 0 1px #fff"></div>
<div class="a rbtn" style="left:423px;top:260px;width:16px;height:14px;border-color:#a8a8a8"></div><div class="a" style="left:429px;top:265px;width:4px;height:4px;background:#000;box-shadow:0 0 0 1px #fff"></div>
<div class="a rbtn" style="left:472px;top:260px;width:16px;height:14px;border-color:#a8a8a8"></div><div class="a" style="left:478px;top:265px;width:4px;height:4px;background:#000;box-shadow:0 0 0 1px #fff"></div>
<div class="a rbtn" style="left:156px;top:256px;width:25px;height:22px;border-color:#a8a8a8"></div>
<svg class="a" style="left:156px;top:256px" width="25" height="22"><rect x="5.5" y="5.5" width="14" height="11" fill="#d8d8d8" stroke="#000"/><path d="M6 6h13v10h-1.5l-4-4.2h-7.5z" fill="#d40000"/></svg>
<div class="a rbtn" style="left:605px;top:255px;width:27px;height:24px;border-color:#a8a8a8"></div>
<svg class="a" style="left:605px;top:255px" width="27" height="24">
<defs><linearGradient id="fk" x1="0" y1="0" x2="0" y2="1"><stop offset="0" stop-color="#aca8a8"/><stop offset="0.5" stop-color="#969292"/><stop offset="1" stop-color="#7e7a7a"/></linearGradient></defs>
<rect x="3" y="3.5" width="21" height="16" rx="2" fill="url(#fk)"/>
<rect x="4.5" y="5.5" width="2" height="12" fill="#b4b0b0"/><rect x="20.5" y="5.5" width="2" height="12" fill="#b4b0b0"/>
<path d="M12 6.5h3v3.5h3.5v3h-3.5v3.5h-3v-3.5h-3.5v-3h3.5z" fill="#b81c0c"/>
</svg>
<div class="a edit" style="left:527px;top:258px;width:25px;height:21px"></div>
<div class="t" style="left:529px;top:263px;font-size:11px;color:#100830">74</div>
<div class="a spin" style="left:553px;top:257px;width:16px;height:11px"></div>
<div class="a spin" style="left:553px;top:269px;width:16px;height:11px"></div>
<svg class="a" style="left:553px;top:257px" width="16" height="23"><path d="M5 7h6l-3-3z" fill="#5a6ab0"/><path d="M5 17h6l-3 3z" fill="#5a6ab0"/></svg>
<div class="t kl" style="left:37px;top:283px">Pitch</div>
<div class="t kl" style="left:81px;top:283px">Modulation</div>
<div class="t kl" style="left:152px;top:283px">Sustain</div>
<div class="t kl" style="left:215px;top:283px;letter-spacing:0">Volume</div>
<div class="t kl" style="left:280px;top:283px">Pan</div>
<div class="t kl" style="left:329px;top:283px">Reverb</div>
<div class="t kl" style="left:388px;top:283px">Chorus</div>
<div class="t kl" style="left:494px;top:283px">User</div>
<div class="t kl" style="left:604px;top:283px">Reset</div>

<!-- list -->
<div class="a" style="left:10px;top:297px;width:646px;height:242px;background:#f5f5f5"></div>
<div class="a" style="left:13px;top:300px;width:640px;height:236px;border:1px solid #828790;background:#fff"></div>
<div class="a" style="left:14px;top:311px;width:638px;height:13px;background:linear-gradient(#f4f5f7,#f1f2f4)"></div>
<div class="a" style="left:14px;top:324px;width:638px;height:1px;background:#d5d5d8"></div>
<div class="a" style="left:214px;top:302px;width:1px;height:22px;background:#e2e3e6"></div>
<div class="a" style="left:364px;top:302px;width:1px;height:22px;background:#e2e3e6"></div>
<div class="a" style="left:434px;top:302px;width:1px;height:22px;background:#e2e3e6"></div>
<div class="a" style="left:596px;top:302px;width:1px;height:22px;background:#e2e3e6"></div>
<div class="a" style="left:215px;top:326px;width:1px;height:208px;background:#eeeeee"></div>
<div class="a" style="left:365px;top:326px;width:1px;height:208px;background:#eeeeee"></div>
<div class="a" style="left:435px;top:326px;width:1px;height:208px;background:#eeeeee"></div>
<div class="a" style="left:597px;top:326px;width:1px;height:208px;background:#eeeeee"></div>
<div class="a" style="left:14px;top:342px;width:638px;height:1px;background:#ececec"></div>
<div class="a" style="left:14px;top:359px;width:638px;height:1px;background:#ececec"></div>
<div class="a" style="left:14px;top:376px;width:638px;height:1px;background:#ececec"></div>
<div class="a" style="left:14px;top:393px;width:638px;height:1px;background:#ececec"></div>
<div class="a" style="left:14px;top:410px;width:638px;height:1px;background:#ececec"></div>
<div class="a" style="left:14px;top:427px;width:638px;height:1px;background:#ececec"></div>
<div class="a" style="left:14px;top:444px;width:638px;height:1px;background:#ececec"></div>
<div class="a" style="left:14px;top:461px;width:638px;height:1px;background:#ececec"></div>
<div class="a" style="left:14px;top:478px;width:638px;height:1px;background:#ececec"></div>
<div class="a" style="left:14px;top:495px;width:638px;height:1px;background:#ececec"></div>
<div class="a" style="left:14px;top:512px;width:638px;height:1px;background:#ececec"></div>
<div class="a" style="left:14px;top:529px;width:638px;height:1px;background:#ececec"></div>

<div class="a hib" style="left:19px;top:306px"></div>
<svg class="a" style="left:19px;top:306px" width="16" height="16" viewBox="0 0 16 16">
<ellipse cx="6.6" cy="11.4" rx="3.2" ry="2.3" fill="#474747" transform="rotate(-18 6.6 11.4)"/>
<rect x="8.7" y="2.5" width="1.5" height="9" fill="#474747"/>
<path d="M9.4 2.5c0.6 1.8 2.4 2.4 3.8 4.4c0.3 0.5 0 0.8-0.4 0.5c-1-1.1-2-1.6-3.4-1.9z" fill="#474747"/>
</svg>
<div class="a hib" style="left:221px;top:306px"></div>
<svg class="a" style="left:221px;top:306px" width="16" height="16" viewBox="0 0 16 16">
<path d="M3 4.2h4l1 1h5v6.8h-10z" fill="#555"/><rect x="3.6" y="4.7" width="3" height="1" fill="#ddd"/>
</svg>
<div class="a hib" style="left:371px;top:306px"></div>
<svg class="a" style="left:371px;top:306px" width="16" height="16" viewBox="0 0 16 16">
<circle cx="8" cy="8" r="6.2" fill="#565656"/>
<path d="M7.8 3.3v6l2.6 2.1" fill="none" stroke="#fff" stroke-width="1.5"/>
</svg>
<div class="a hib" style="left:441px;top:306px"></div>
<svg class="a" style="left:441px;top:306px" width="16" height="16" viewBox="0 0 16 16">
<ellipse cx="4.2" cy="12" rx="2.6" ry="1.9" fill="#474747"/>
<ellipse cx="10.5" cy="11.2" rx="2.6" ry="1.9" fill="#474747"/>
<rect x="5.6" y="3.4" width="1.3" height="8.6" fill="#474747"/>
<rect x="11.9" y="2.6" width="1.3" height="8.6" fill="#474747"/>
<path d="M5.6 3.4l7.6-1v2l-7.6 1z" fill="#474747"/>
</svg>
<div class="t hd" style="left:48px;top:309px">Title (0 item)</div>
<div class="t hd" style="left:248px;top:309px">Folder</div>
<div class="t hd" style="left:398px;top:309px;letter-spacing:-0.2px">Time</div>
<div class="t hd" style="left:468px;top:309px">SoundFont/SysEx</div>
</body></html>
